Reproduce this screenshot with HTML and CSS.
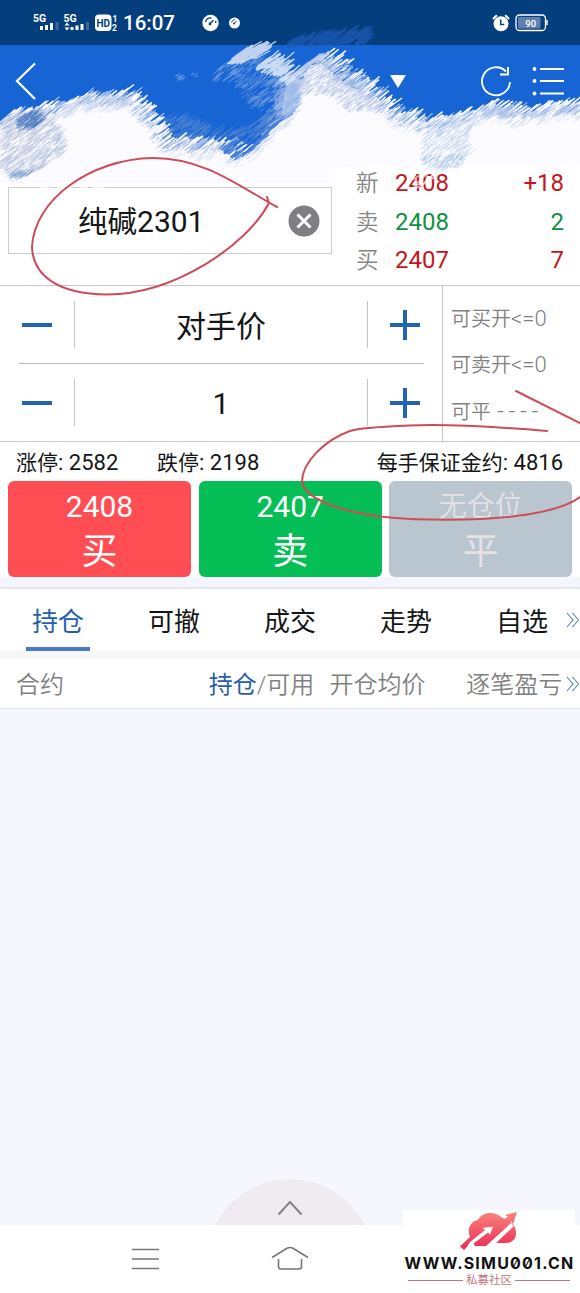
FILE: index.html
```html
<!DOCTYPE html>
<html lang="zh-CN">
<head>
<meta charset="utf-8">
<meta name="viewport" content="width=device-width, initial-scale=1">
<title>期货交易</title>
<link rel="stylesheet" href="styles.css">
</head>
<body>
<main class="screen">
  <header class="status">
    <svg class="status-icons" viewBox="0 0 120 45">
      <g class="status-small"><text x="33" y="21.500">5G</text><text x="63.500" y="21.500">5G</text></g>
      <g fill="#fff">
        <rect x="40" y="26" width="3" height="4"/><rect x="45" y="25" width="3" height="5"/><rect x="50" y="23" width="3" height="7"/><rect x="55.500" y="22" width="3" height="8" opacity=".22"/>
        <path d="M64.500 25.500 67 22.500 69.500 25.500ZM64.500 27.500 67 30.500 69.500 27.500Z"/>
        <rect x="70.500" y="27" width="3" height="3"/><rect x="75.500" y="25.500" width="3" height="4.500"/><rect x="80.500" y="24" width="3" height="6"/><rect x="86" y="22" width="3" height="8" opacity=".22"/>
        <rect x="95" y="14.500" width="16.500" height="16.500" rx="4"/>
      </g>
      <text class="status-hd" x="96.500" y="26.500">HD</text>
      <g class="status-sim"><text x="112.500" y="21.500">1</text><text x="112" y="30.500">2</text></g>
    </svg>
    <span class="clock">16:07</span>
    <svg class="gauges" viewBox="0 0 40 18">
      <circle cx="8.500" cy="9" r="8.200" fill="#fff"/><path d="M3.500 8a5.500 5.500 0 0 1 6-4M7.500 10.200l4-4M13.500 7l.500 2" stroke="#043e7c" stroke-width="1.300" fill="none"/><circle cx="8" cy="10" r="1.400" fill="#043e7c"/>
      <circle cx="32.500" cy="9" r="5.500" fill="#fff"/><path d="M29.500 8.500a4 4 0 0 1 3.500-3M32 9.500l2.500-2.500" stroke="#043e7c" stroke-width=".9" fill="none"/><circle cx="32" cy="9.500" r="1" fill="#043e7c"/>
    </svg>
    <svg class="alarm" viewBox="0 0 18 18"><circle cx="9" cy="9.800" r="7.500" fill="#fff"/><path d="M1.500 4.500 4.300 1.700M16.500 4.500 13.700 1.700" stroke="#fff" stroke-width="2" stroke-linecap="round"/><path d="M8.700 5.500v5h3.500" stroke="#043e7c" stroke-width="1.500" fill="none"/></svg>
    <svg class="battery" viewBox="0 0 34 18"><rect x="1" y="1" width="29.500" height="15.500" rx="3.500" fill="none" stroke="#fff" stroke-width="1.300"/><rect x="3" y="3" width="22.500" height="11.500" rx="1" fill="#5f7fb0"/><path d="M32 6v5" stroke="#fff" stroke-width="1.500"/><text x="10.300" y="12.600">90</text></svg>
  </header>

  <nav class="topbar">
    <svg class="back" viewBox="0 0 22 38"><path d="M20 1.500 2 19 20 37" fill="none" stroke="#fff" stroke-width="2.200"/></svg>
    <svg class="drop" viewBox="0 0 16 14"><path d="M0 0h16L8 13Z" fill="#fff"/></svg>
    <svg class="reload" viewBox="0 0 32 34"><path d="M26 6.500A14 14 0 1 0 30 17" fill="none" stroke="#fff" stroke-width="1.900"/><path d="M28 2v7.500h-8" fill="none" stroke="#fff" stroke-width="1.900"/></svg>
    <svg class="list" viewBox="0 0 32 30"><path d="M8 3h24M8 15h24M8 27.500h24" stroke="#fff" stroke-width="2.200"/><circle cx="2.500" cy="3" r="1.900" fill="#fff"/><circle cx="2.500" cy="15" r="1.900" fill="#fff"/><circle cx="2.500" cy="27.500" r="1.900" fill="#fff"/></svg>
  </nav>

  <section class="quote">
    <div class="contract">
      <span class="contract-name">纯碱<b>2301</b></span>
      <svg class="clear" viewBox="0 0 32 32"><circle cx="16" cy="16" r="15.500" fill="#7f7f83"/><path d="m9.500 9.500 13 13m0-13-13 13" stroke="#fff" stroke-width="3"/></svg>
    </div>
    <div class="prices">
      <div class="price-row"><span>新</span><b class="up">2408</b><b class="up end">+18</b></div>
      <div class="price-row"><span>卖</span><b class="down">2408</b><b class="down end">2</b></div>
      <div class="price-row"><span>买</span><b class="up">2407</b><b class="up end">7</b></div>
    </div>
  </section>

  <section class="order">
    <div class="steppers">
      <div class="stepper"><i class="sign"></i><span class="value">对手价</span><i class="sign plus"></i></div>
      <div class="stepper second"><i class="sign"></i><span class="value digit">1</span><i class="sign plus"></i></div>
    </div>
    <div class="limits">
      <p>可买开<b>&lt;=0</b></p>
      <p>可卖开<b>&lt;=0</b></p>
      <p>可平<b class="dashes">----</b></p>
    </div>
  </section>

  <section class="trade">
    <div class="info"><span>涨停<b>: 2582</b></span><span>跌停<b>: 2198</b></span><span class="margin">每手保证金约<b>: 4816</b></span></div>
    <div class="buttons">
      <div class="btn buy"><b>2408</b><span>买</span></div>
      <div class="btn sell"><b>2407</b><span>卖</span></div>
      <div class="btn flat"><em>无仓位</em><span>平</span></div>
    </div>
  </section>

  <nav class="tabs">
    <span class="tab active">持仓</span><span class="tab">可撤</span><span class="tab">成交</span><span class="tab">走势</span><span class="tab last">自选</span>
    <svg class="more" viewBox="0 0 14 16"><path d="m1 1 6 7-6 7M6.500 1l6 7-6 7" fill="none" stroke="#5580ad" stroke-width="1.100"/></svg>
  </nav>
  <div class="columns">
    <span class="c-name">合约</span><span class="c-pos"><mark>持仓</mark>/可用</span><span class="c-avg">开仓均价</span><span class="c-pl">逐笔盈亏</span>
    <svg class="more" viewBox="0 0 14 16"><path d="m1 1 6 7-6 7M6.500 1l6 7-6 7" fill="none" stroke="#5580ad" stroke-width="1.100"/></svg>
  </div>
  <section class="empty">
    <div class="dome"><svg viewBox="0 0 26 16"><path d="m1.500 14.500 11.500-12.500 11.500 12.500" fill="none" stroke="#858287" stroke-width="2"/></svg></div>
  </section>
  <footer class="sysnav">
    <svg class="menu" viewBox="0 0 28 22"><path d="M0 1.500h27M0 11h27M0 20.500h27" stroke="#777" stroke-width="1.500"/></svg>
    <svg class="home" viewBox="0 0 38 25"><path d="M1 11.500 16 2.300Q19 .600 22 2.300L37 11.500M7.500 13v7.500q0 2.500 2.500 2.500h18q2.500 0 2.500-2.500V13" fill="none" stroke="#777" stroke-width="1.600"/></svg>
  </footer>

  <svg class="paint" viewBox="0 0 580 300" id="paint"></svg>
  <svg class="pen" viewBox="0 0 580 560">
    <path d="M277 207C240 187 205 158 153 158C90 159 34 200 32 247C33 275 57 294 107 294.500C175 294 247 245 269 203L267 197"/>
    <path d="M516 391 580 423M547 431C500 427 440 424 408 425.500C380 427 363 427 350 431C325 440 302 462 302 482C305 500 350 519 430 519.500C510 521 560 512 580 497"/>
  </svg>
  <aside class="watermark">
    <svg class="cloud" viewBox="0 0 58 38">
      <defs><linearGradient id="coral" gradientUnits="userSpaceOnUse" x1="0" y1="0" x2="0" y2="38"><stop stop-color="#f9857a"/><stop offset="1" stop-color="#ec2857"/></linearGradient></defs>
      <path d="M10 25C7 18 10 9 18 8C22-1 36-1 42 6C52 8 56 14 56 21C56 27 52 31 46 31H36L27 34H15Z" fill="url(#coral)"/>
      <path d="M0 34.500 12 23 16 27 4 38Z" fill="url(#coral)"/>
      <path d="M5 38 28 20.500 30 23 33 14.500 22.500 16 25 18 10 30ZM25 35 51 11 54 14 34 33Z" fill="#fff"/>
      <path d="M40 11 48 4.500 45 3 57 0 53 12 51 9 44 15Z" fill="url(#coral)"/>
    </svg>
    <strong>WWW.SIMU001.CN</strong>
    <div class="tag"><span>私募社区</span></div>
  </aside>
</main>
<script src="paint.js"></script>
</body>
</html>
```
FILE: styles.css
```css
* { box-sizing: border-box; }
body { margin: 0; }
svg { display: block; flex: none; }
b, em, i { font-style: normal; font-weight: 400; }
p { margin: 0; }
.screen {
  position: relative; width: 580px; height: 1293px; overflow: hidden;
  display: flex; flex-direction: column; background: #fff;
  font-family: Roboto, "Noto Sans CJK SC", sans-serif; color: #151515;
}
.status { height: 45px; background: #043e7c; display: flex; align-items: flex-start; flex: none; }
.status-icons { width: 120px; height: 45px; }
.status-small { font: 700 10.5px Roboto, sans-serif; fill: #fff; }
.status-hd { font: 700 10px Roboto, sans-serif; fill: #043e7c; }
.status-sim { font: 700 8.5px Roboto, sans-serif; fill: #fff; }
.clock { width: 82px; padding-left: 3px; font-size: 20.5px; line-height: 46px; color: #fff; font-weight: 500; }
.gauges { width: 40px; height: 18px; margin-top: 14px; }
.alarm { width: 18px; height: 18px; margin: 14px 0 0 250px; }
.battery { width: 34px; height: 18px; margin: 14px 0 0 5px; }
.battery text { font: 500 9.5px Roboto, sans-serif; fill: #fff; }
.topbar { height: 95px; background: #1765d5; display: flex; flex: none; padding-left: 15px; }
.back { width: 22px; height: 38px; margin-top: 17px; }
.drop { width: 16px; height: 14px; margin: 30px 0 0 353px; }
.reload { width: 32px; height: 34px; margin: 20px 0 0 74px; }
.list { width: 32px; height: 30px; margin: 21px 0 0 20px; }
.quote { height: 146px; border-bottom: 1px solid #c5c5c5; display: flex; flex: none; padding-left: 8px; }
.contract { width: 324px; height: 67px; margin-top: 47px; border: 1px solid #ccc; display: flex; align-items: center; padding-left: 69px; }
.contract-name { width: 210px; padding-top: 3px; font-size: 29.5px; line-height: 40px; white-space: nowrap; }
.contract-name b { font-size: 30px; }
.clear { width: 32px; height: 32px; }
.prices { width: 208px; margin: 24px 0 0 24px; }
.price-row { height: 38.5px; display: grid; grid-template-columns: 39px 69px 1fr; align-items: center; }
.price-row span { font-size: 22.5px; line-height: 38px; color: #858585; font-weight: 350; }
.price-row b { font-size: 24px; }
.up { color: #c4161c; }
.down { color: #10913f; }
.end { text-align: right; }
.order { height: 156px; border-bottom: 1px solid #c5c5c5; display: flex; flex: none; }
.steppers { width: 443px; border-right: 1px solid #c5c5c5; padding: 0 18px 0 19px; }
.stepper { height: 77px; display: grid; grid-template-columns: 55px 294px 56px; align-items: center; }
.second { border-top: 1px solid #b9b9b9; height: 78px; }
.sign { width: 30px; height: 30px; margin-left: 3px; background: linear-gradient(#2464b5, #2464b5) center/30px 4px no-repeat; }
.plus { margin-left: 22px; background: linear-gradient(#2464b5, #2464b5) center/30px 4px no-repeat, linear-gradient(#2464b5, #2464b5) center/4px 30px no-repeat; }
.value { height: 47px; line-height: 52px; border-left: 1px solid #c5c5c5; border-right: 1px solid #c5c5c5; text-align: center; font-size: 30px; }
.digit { line-height: 50px; }
.limits { padding: 10px 0 0 8px; color: #808080; font-size: 20px; }
.limits p { height: 46px; line-height: 46px; white-space: nowrap; font-weight: 350; }
.limits b { font-size: 22px; font-weight: 350; }
.limits .dashes { margin-left: 6px; font-size: 24px; letter-spacing: 4.6px; }
.trade { height: 147px; flex: none; background: linear-gradient(#fff 0 135px, #f5f6fd 135px 145px, #e8e9f0 145px); }
.info { height: 39px; display: flex; font-size: 21px; line-height: 41px; padding: 0 17px 0 16px; white-space: nowrap; }
.info span { width: 141px; }
.info .margin { width: auto; margin-left: auto; }
.info b { font-size: 22px; }
.buttons { display: grid; grid-template-columns: repeat(3, 183px); gap: 7.7px; padding-left: 8px; }
.btn { height: 96px; border-radius: 6px; color: #fff; text-align: center; display: flex; flex-direction: column; white-space: nowrap; }
.btn b, .btn em { font-size: 30px; line-height: 51px; height: 49px; }
.btn em { font-size: 28px; line-height: 52px; font-weight: 350; }
.btn span { font-size: 36px; line-height: 45px; }
.buy { background: #ff4d54; }
.sell { background: #05bf56; }
.flat { background: #b9c5cf; color: #e5e1e7; }
.tabs { height: 62px; flex: none; display: flex; padding-left: 26px; font-size: 26px; line-height: 66px; }
.tab { width: 64px; height: 62px; margin-right: 52px; text-align: center; white-space: nowrap; }
.active { color: #285fab; border-bottom: 4px solid #477bca; }
.more { width: 14px; height: 16px; margin-top: 23px; }
.tabs .last { margin-right: 12px; }
.columns { height: 58px; border-top: 8px solid #f7f7f7; border-bottom: 1px solid #e3e6ee; display: flex; flex: none; padding-left: 16px; font-size: 24px; line-height: 53px; color: #808080; font-weight: 350; white-space: nowrap; }
.c-name { width: 193px; }
.c-pos { width: 121px; }
.c-avg { width: 137px; }
.c-pl { width: 100px; }
.columns mark { background: none; color: #285fab; font-weight: 400; }
.columns .more { margin-top: 17px; }
.empty { flex: 1; background: #f6f7fe; display: flex; align-items: flex-end; justify-content: center; overflow: hidden; }
.dome { width: 150px; height: 46px; overflow: hidden; display: flex; justify-content: center; padding-top: 21px; background: radial-gradient(circle at 75px 84px, #f0ebf0 83.500px, transparent 84px); }
.dome svg { width: 26px; height: 16px; }
.sysnav { height: 68px; background: #fff; flex: none; display: flex; align-items: flex-start; padding: 21px 0 0 132px; }
.menu { width: 28px; height: 22px; margin-top: 2px; }
.home { width: 38px; height: 25px; margin-left: 111px; }
.paint { position: absolute; left: 0; top: 0; width: 580px; height: 300px; pointer-events: none; }
.pen { position: absolute; left: 0; top: 0; width: 580px; height: 560px; fill: none; stroke: #cd4c57; stroke-width: 2; stroke-linecap: round; pointer-events: none; }
.watermark { position: absolute; left: 403px; top: 1210px; width: 172px; height: 83px; background: #fff; display: flex; flex-direction: column; align-items: center; }
.cloud { width: 58px; height: 38px; margin-top: 2px; }
.watermark strong { font: 700 16px/18px Inter, sans-serif; font-feature-settings: "zero"; letter-spacing: 1.2px; color: #111; margin: 4px -1px 0 0; white-space: nowrap; }
.tag { display: flex; align-items: center; gap: 3px; font-size: 11.5px; line-height: 14px; color: #bd777d; margin-top: 1px; }
.tag::before, .tag::after { content: ""; width: 55px; height: 1px; background: #bd777d; }
```
FILE: paint.js
```js
// Dry-brush texture over the header, drawn as seeded short strokes.
const root = document.getElementById("paint");
let seed = 77;
const rnd = () => (seed = (seed * 16807) % 2147483647) / 2147483647;
const add = (name, attrs) => {
  const el = document.createElementNS("http://www.w3.org/2000/svg", name);
  for (const key in attrs) el.setAttribute(key, attrs[key]);
  root.appendChild(el);
};
const inside = (x, y, p) => {
  let hit = false;
  for (let i = 0, j = p.length - 1; i < p.length; j = i++) {
    const [ax, ay] = p[i], [bx, by] = p[j];
    if ((ay > y) !== (by > y) && x < (bx - ax) * (y - ay) / (by - ay) + ax) hit = !hit;
  }
  return hit;
};
const stroke = (x, y, len, slope) => {
  const l = len * (0.3 + rnd() * 0.9);
  return `M${x.toFixed(1)} ${y.toFixed(1)}l${l.toFixed(1)} ${(-l * slope * (0.85 + rnd() * 0.3)).toFixed(1)}`;
};
const hatch = (poly, n, color, len, width, opacity, slope = 0.75) => {
  const xs = poly.map(p => p[0]), ys = poly.map(p => p[1]);
  const x0 = Math.min(...xs), x1 = Math.max(...xs), y0 = Math.min(...ys), y1 = Math.max(...ys);
  let d = "";
  for (let i = 0; i < n; i++) {
    const x = x0 + rnd() * (x1 - x0), y = y0 + rnd() * (y1 - y0);
    if (inside(x, y, poly)) d += stroke(x - len / 3, y + len / 4, len, slope);
  }
  add("path", { d, stroke: color, "stroke-width": width, opacity, fill: "none" });
};
const fringe = (line, color, len, width, opacity, spread, density) => {
  let d = "";
  for (let i = 1; i < line.length; i++) {
    const [ax, ay] = line[i - 1], [bx, by] = line[i];
    const n = Math.ceil(Math.hypot(bx - ax, by - ay) * density);
    for (let k = 0; k < n; k++) {
      const t = rnd();
      d += stroke(ax + (bx - ax) * t - len / 3, ay + (by - ay) * t + len / 4 + rnd() * spread, len, 0.75);
    }
  }
  add("path", { d, stroke: color, "stroke-width": width, opacity, fill: "none" });
};
// translucent strokes that reach into the status bar
hatch([[290, 41], [310, 36], [335, 35], [350, 32], [364, 31], [367, 43], [290, 45]], 330, "#1b59b3", 11, 1.4, 0.8);
add("path", { d: "M150 139H275L262 152H160Z", fill: "#1765d5" });
// washed area left of the crest
const wash = [[213, 72], [228, 62], [255, 60], [290, 66], [296, 88], [292, 118], [272, 132], [258, 112], [232, 80], [215, 80]];
hatch(wash, 520, "#6290db", 10, 0.9, 0.55);
hatch(wash, 330, "#a3bdea", 9, 0.7, 0.6);
hatch([[157, 118], [184, 117], [225, 133], [255, 123], [275, 105], [286, 94], [287, 108], [262, 134], [240, 152], [210, 147], [165, 144]], 1000, "#6690d2", 10, 0.8, 0.55);

const edge = [[0, 122], [10, 114], [24, 115], [38, 109], [54, 108], [72, 102], [90, 97], [103, 101], [120, 96], [130, 98], [139, 107], [150, 119], [158, 134], [169, 145], [183, 141], [196, 146], [210, 145], [223, 144], [238, 154], [248, 150], [262, 137], [274, 123], [288, 112], [290, 92], [298, 72], [312, 60], [323, 57], [334, 65], [346, 77], [363, 85], [373, 95], [386, 106], [397, 116], [423, 122], [440, 122], [456, 117], [472, 114], [487, 107], [501, 108], [521, 115], [548, 108], [580, 107]];
const base = edge.concat([[580, 165], [432, 165], [368, 166], [331, 168], [331, 183], [0, 183]]);
add("path", { d: "M" + base.map(p => p.join(" ")).join("L") + "Z", fill: "#fcfbff" });
fringe(edge, "#b9cdef", 17, 1.2, 0.85, 5, 0.8);
fringe(edge, "#fcfbff", 18, 1.5, 1, 9, 1);
fringe(edge, "#9db8e6", 10, 0.7, 0.5, 14, 0.8);
fringe(edge, "#4f83d6", 9, 0.8, 0.6, 5, 0.35);
// blue strokes biting into the white along the lower rim
fringe(edge.slice(17, 30), "#2f70d3", 13, 1.2, 0.85, 3, 0.9);
fringe(edge.slice(23, 30), "#dfe8f8", 13, 1.1, 0.8, 2, 0.9);
fringe([[290, 112], [289, 90], [296, 72]], "#cbd9f3", 16, 1.2, 0.9, 4, 1.6);
hatch([[276, 80], [296, 74], [298, 100], [292, 116], [278, 120]], 240, "#9db9e8", 12, 1, 0.7);
hatch([[230, 61], [240, 52], [252, 45], [266, 47], [260, 56], [246, 61]], 210, "#d3def4", 13, 1.3, 0.9, 0.6);
hatch([[258, 66], [265, 59], [279, 57], [290, 64], [292, 84], [281, 77], [270, 73]], 210, "#dbe5f7", 12, 1.3, 0.9);
// grainy blue showing through the white
const left = [[0, 123], [20, 112], [39, 108], [53, 119], [63, 135], [65, 153], [48, 165], [25, 177], [10, 178], [0, 166]];
hatch(left, 900, "#abb9da", 8, 0.7, 0.65);
hatch([[17, 118], [33, 110], [45, 119], [34, 128], [20, 131]], 220, "#4f7cc4", 8, 1, 0.7);
hatch([[8, 174], [25, 170], [30, 175], [13, 180]], 70, "#7799d2", 6, 0.8, 0.7);
hatch([[294, 84], [304, 66], [320, 57], [343, 79], [362, 88], [387, 113], [350, 111], [327, 94], [307, 96]], 950, "#a9bbe0", 7, 0.7, 0.65);
hatch([[60, 108], [88, 96], [120, 95], [134, 103], [120, 109], [86, 103], [65, 117]], 230, "#b0c2e6", 8, 0.8, 0.65);
hatch([[423, 121], [452, 115], [482, 112], [468, 132], [470, 155], [456, 166], [438, 169], [422, 164]], 480, "#bed0ec", 8, 0.8, 0.65);
hatch([[424, 157], [466, 155], [465, 166], [440, 172], [424, 164]], 100, "#93b5dd", 4, 0.9, 0.5, 1.3);
hatch([[480, 108], [500, 106], [522, 113], [550, 108], [579, 106], [579, 114], [484, 118]], 260, "#b0c4e9", 9, 0.8, 0.7);
hatch([[175, 76], [183, 72], [184, 80], [177, 80]], 25, "#8bb1e8", 4, 0.9, 0.6);
hatch([[191, 74], [197, 73], [197, 77]], 12, "#8bb1e8", 3, 0.8, 0.6);
// faded digits under the last dabs
hatch([[408, 174], [436, 174], [430, 182], [412, 190]], 42, "#fff", 6, 1.1, 0.8);
// faint wear along the field border
add("path", { d: "M40 187.500h10m7 0h14m9 0h8m5 0h12", stroke: "#fff", "stroke-width": 1.6, opacity: 0.75 });
```
